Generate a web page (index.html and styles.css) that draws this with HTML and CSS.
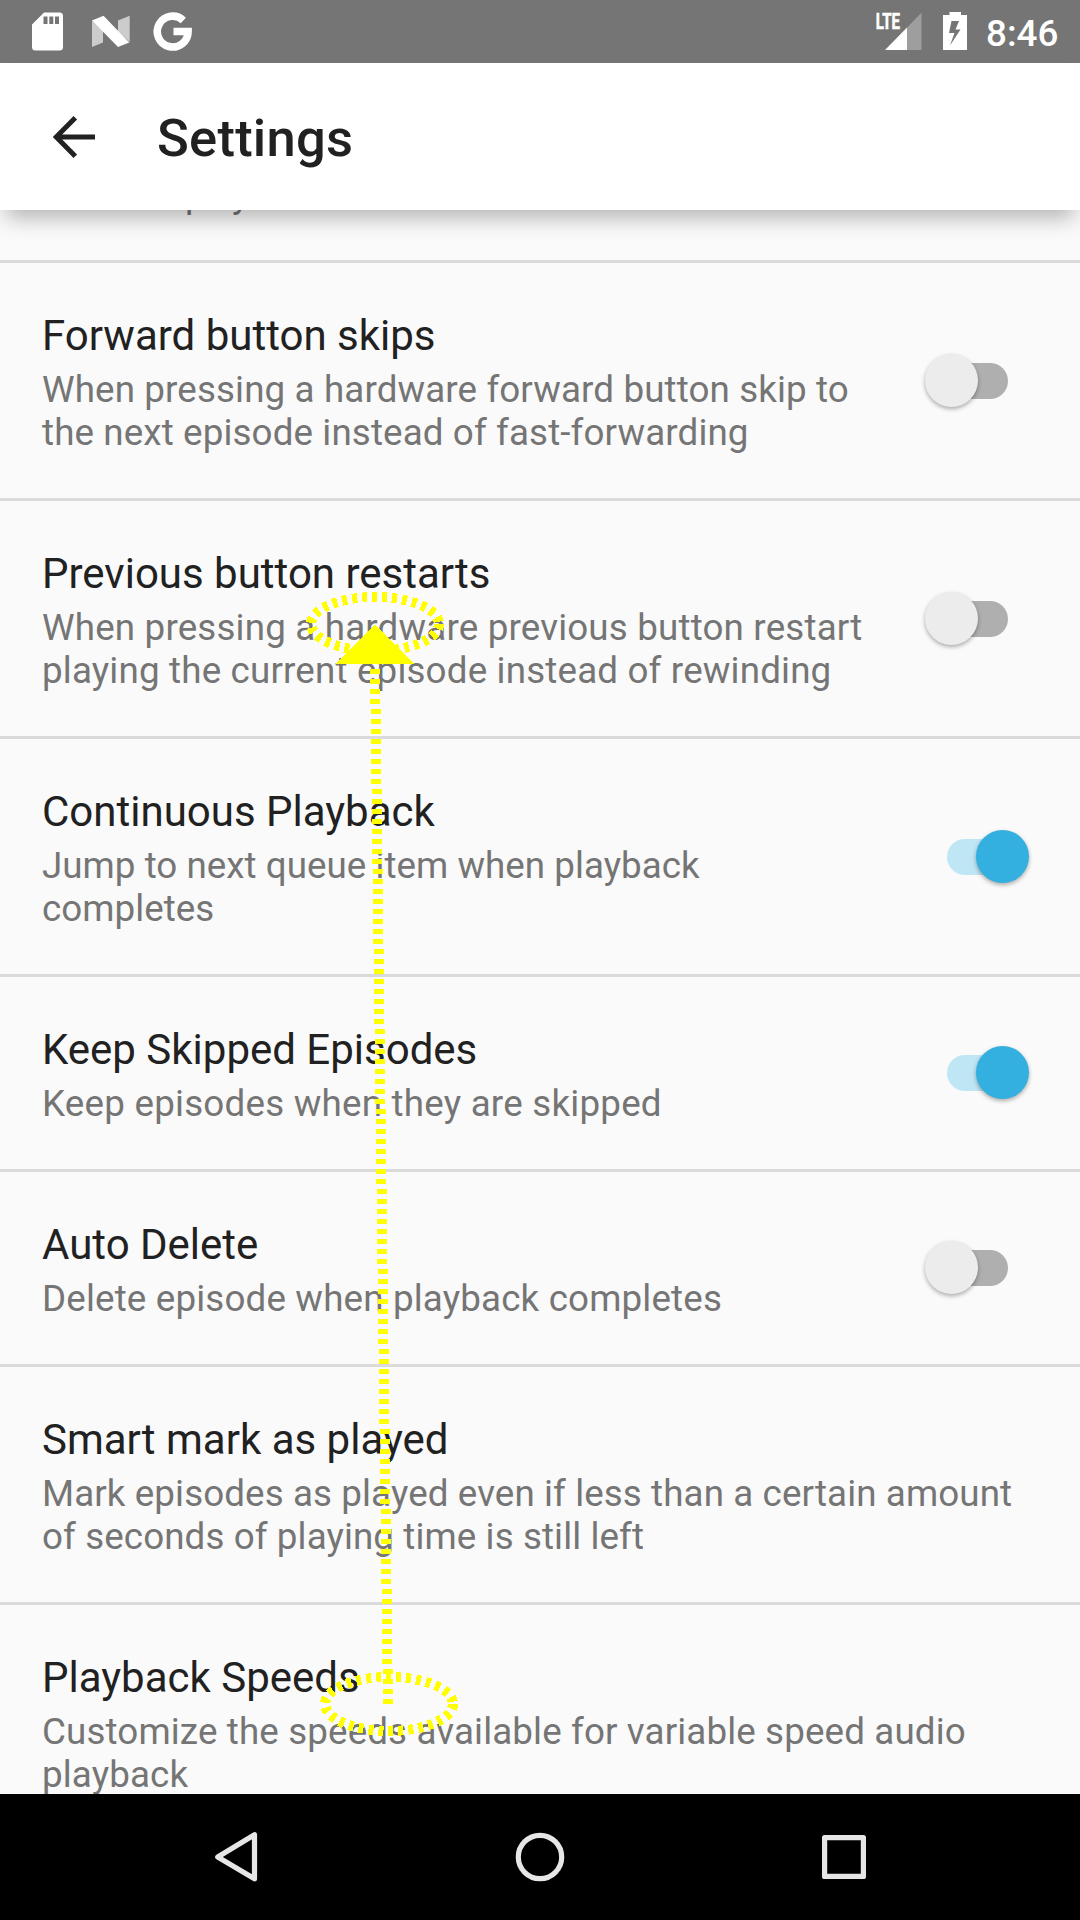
FILE: index.html
```html
<!DOCTYPE html>
<html lang="en">
<head>
<meta charset="utf-8">
<title>Settings</title>
<link rel="stylesheet" href="styles.css">
</head>
<body>
<div class="screen">
  <header class="status-bar">
    <svg class="status-icons" width="200" height="63" viewBox="0 0 200 63">
      <path fill="#fff" fill-rule="evenodd" d="M44 12.500H59.500a3.500 3.500 0 0 1 3.500 3.500V47a3.500 3.500 0 0 1-3.500 3.500H35.500A3.500 3.500 0 0 1 32 47V24.500ZM43.500 16.500V24H47.500V16.500ZM49.300 16.500V24H53.300V16.500ZM55 16.500V24H59V16.500Z"/>
      <path fill="#fff" fill-opacity=".63" d="M92 20.500L103 31V42.500L92 47ZM118 20.500L129.700 15.800V42L118 31.500Z"/>
      <path fill="#fff" d="M92 20.500L103.500 15.800L129.300 42.500L118 47Z"/>
      <path fill="none" stroke="#fff" stroke-width="7.600" d="M183.300 20.400A15.400 15.400 0 1 0 188.100 31.500H173.500"/>
    </svg>
    <div class="status-right">
      <svg width="100" height="63" viewBox="874 0 100 63">
        <text class="lte" transform="translate(875.800 29) scale(.7 1)">LTE</text>
        <path fill="#fff" fill-opacity=".3" d="M907 27.500L921.500 12.800V50H907Z"/>
        <path fill="#fff" d="M885 50L907 27.500V50Z"/>
        <path fill="#fff" fill-rule="evenodd" d="M949.500 12H961V15H967V50H943V15H949.500ZM951.500 21L949 33H954.500L950 45.500L960.500 29.500H955.500L959 21Z"/>
      </svg>
      <span class="clock">8:46</span>
    </div>
  </header>

  <div class="app-bar">
    <svg width="42" height="42" viewBox="0 0 42 42"><path fill="none" stroke="#212121" stroke-width="5" d="M42 21H3.500M22.300 1.800L3.200 21L22.300 40.200"/></svg>
    <h1 class="app-title">Settings</h1>
  </div>

  <main class="list">
    <div class="row row-partial"><p class="summary">wants to play sounds</p></div>
    <div class="row forward">
      <div class="text"><h2 class="title">Forward button skips</h2><p class="summary">When pressing a hardware forward button skip to the next episode instead of fast-forwarding</p></div>
      <div class="switch"><span class="thumb"></span></div>
    </div>
    <div class="row previous">
      <div class="text"><h2 class="title">Previous button restarts</h2><p class="summary">When pressing a hardware previous button restart playing the current episode instead of rewinding</p></div>
      <div class="switch"><span class="thumb"></span></div>
    </div>
    <div class="row continuous">
      <div class="text"><h2 class="title">Continuous Playback</h2><p class="summary">Jump to next queue item when playback completes</p></div>
      <div class="switch on"><span class="thumb"></span></div>
    </div>
    <div class="row keep">
      <div class="text"><h2 class="title">Keep Skipped Episodes</h2><p class="summary">Keep episodes when they are skipped</p></div>
      <div class="switch on"><span class="thumb"></span></div>
    </div>
    <div class="row delete">
      <div class="text"><h2 class="title">Auto Delete</h2><p class="summary">Delete episode when playback completes</p></div>
      <div class="switch"><span class="thumb"></span></div>
    </div>
    <div class="row smart">
      <div class="text wide"><h2 class="title">Smart mark as played</h2><p class="summary">Mark episodes as played even if less than a certain amount of seconds of playing time is still left</p></div>
    </div>
    <div class="row speeds">
      <div class="text wide"><h2 class="title">Playback Speeds</h2><p class="summary">Customize the speeds available for variable speed audio playback</p></div>
    </div>
  </main>

  <nav class="nav-bar">
    <svg width="1080" height="126" viewBox="0 1794 1080 126" fill="none" stroke="#e6e6e6" stroke-width="5.200" stroke-linejoin="round">
      <path d="M254.500 1834.700V1878.800L217.700 1857Z"/>
      <circle cx="540" cy="1857" r="21.700"/>
      <rect x="824.600" y="1837.600" width="38.800" height="38.800"/>
    </svg>
  </nav>

  <svg class="gesture" width="1080" height="1920" viewBox="0 0 1080 1920" fill="none" stroke="#ff0" stroke-width="10" stroke-dasharray="5 5" shape-rendering="crispEdges">
    <ellipse cx="375" cy="624" rx="64" ry="27"/>
    <ellipse cx="389" cy="1704" rx="64" ry="27"/>
    <path d="M388 1704L375 664"/>
    <path d="M375 624L414 664H335Z" fill="#ff0" stroke="none"/>
  </svg>
</div>
</body>
</html>
```
FILE: styles.css
```css
* { box-sizing: border-box; }
body { margin: 0; background: #fafafa; font-family: Roboto, sans-serif; }
h1, h2, p { margin: 0; font-weight: 400; }
svg { display: block; flex: none; }

.screen {
  position: relative;
  display: flex;
  flex-direction: column;
  width: 1080px;
  height: 1920px;
  overflow: hidden;
}

.status-bar {
  display: flex;
  justify-content: space-between;
  flex: none;
  height: 63px;
  background: #757575;
}
.status-right { display: flex; padding-right: 21px; }
.lte { font-size: 21.5px; font-weight: 700; fill: #fff; stroke: #fff; stroke-width: .6px; }
.clock { color: #fff; font-size: 36.75px; font-weight: 500; line-height: 67px; width: 73px; margin-left: 12px; }

.app-bar {
  position: relative;
  z-index: 1;
  display: flex;
  align-items: center;
  flex: none;
  height: 147px;
  padding-left: 53px;
  background: #fff;
  box-shadow: 0 14px 20px -6px rgba(0, 0, 0, .28);
}
.app-title {
  margin-left: 62px;
  padding-top: 2px;
  color: #212121;
  font-size: 52.5px;
  font-weight: 500;
  letter-spacing: .25px;
  line-height: 62px;
}

.list { flex: 1; min-height: 0; overflow: hidden; }
.row {
  display: flex;
  justify-content: space-between;
  align-items: center;
  padding: 48px 51px 44px 42px;
  border-bottom: 3px solid #dadada;
}
.row-partial { height: 53px; align-items: flex-end; padding-top: 0; }
.text { width: 826px; }
.wide { width: 996px; margin-right: -9px; }
.title { color: #212121; font-size: 42px; line-height: 49px; margin-bottom: 8px; }
.summary { color: #757575; font-size: 36.75px; line-height: 43px; }

.row-partial .summary { letter-spacing: -.75px; }
.forward .summary { letter-spacing: .12px; }
.previous .summary { letter-spacing: .17px; }
.continuous .summary { letter-spacing: .03px; }
.keep .summary { letter-spacing: .22px; }
.delete .summary { letter-spacing: .16px; }
.smart .summary { letter-spacing: .1px; }
.speeds .summary { letter-spacing: .13px; }

.switch {
  position: relative;
  top: -1.5px;
  width: 61px;
  height: 36px;
  margin-right: 21.5px;
  border-radius: 18px;
  background: #afafaf;
}
.thumb {
  position: absolute;
  left: -21.5px;
  top: -9px;
  width: 53px;
  height: 53px;
  border-radius: 50%;
  background: #ececec;
  box-shadow: 0 2px 4px rgba(0, 0, 0, .32);
}
.on { background: #bee6f4; }
.on .thumb { left: 29.5px; background: #33b0e0; }
.keep .switch, .delete .switch { top: -2px; }

.nav-bar { flex: none; height: 126px; background: #000; position: relative; }
.gesture { position: absolute; left: 0; top: 0; z-index: 2; }
```
